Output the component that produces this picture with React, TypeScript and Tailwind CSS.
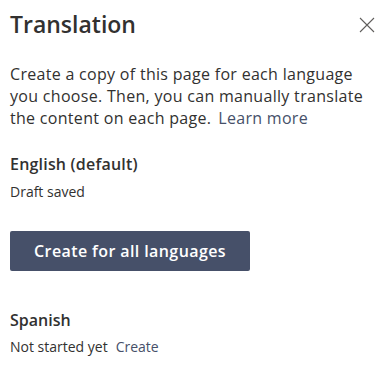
import React from 'react';

const CloseIcon: React.FC = () => (
  <svg width="16" height="16" viewBox="0 0 16 16" fill="none" stroke="#605e5c" strokeWidth="1.1">
    <path d="M1 1L15 15M15 1L1 15" />
  </svg>
);

const App: React.FC = () => {
  return (
    <div className="w-[384px] h-[368px] bg-white text-[#323130] font-['Open_Sans',sans-serif] px-[10px] overflow-hidden">
      {/* Header */}
      <div className="flex items-start justify-between pt-[8px]">
        <h1 className="text-[23px] leading-[32px] font-semibold">Translation</h1>
        <button className="mt-[9px] mr-[-1px]">
          <CloseIcon />
        </button>
      </div>

      <p className="mt-[23px] text-[16px] leading-[22px] tracking-[0.3px] pr-[4px]">
        Create a copy of this page for each language you choose. Then, you can manually translate the content on each page.
        <a className="ml-[7px] text-[#465069]">Learn more</a>
      </p>

      {/* Default language */}
      <div className="mt-[24px]">
        <h2 className="text-[16px] leading-[22px] font-semibold tracking-[0.2px]">English (default)</h2>
        <p className="mt-[7px] text-[14px] leading-[20px]">Draft saved</p>
      </div>

      <button className="mt-[29px] w-[240px] h-[40px] rounded-[2px] bg-[#465069] text-white text-[16px] font-semibold tracking-[0.4px]">
        Create for all languages
      </button>

      {/* Other languages */}
      <div className="mt-[38px]">
        <h2 className="text-[16px] leading-[22px] font-semibold">Spanish</h2>
        <p className="mt-[6px] text-[14px] leading-[20px]">
          Not started yet
          <a className="ml-[8px] text-[#465069]">Create</a>
        </p>
      </div>
    </div>
  );
};

export default App;
